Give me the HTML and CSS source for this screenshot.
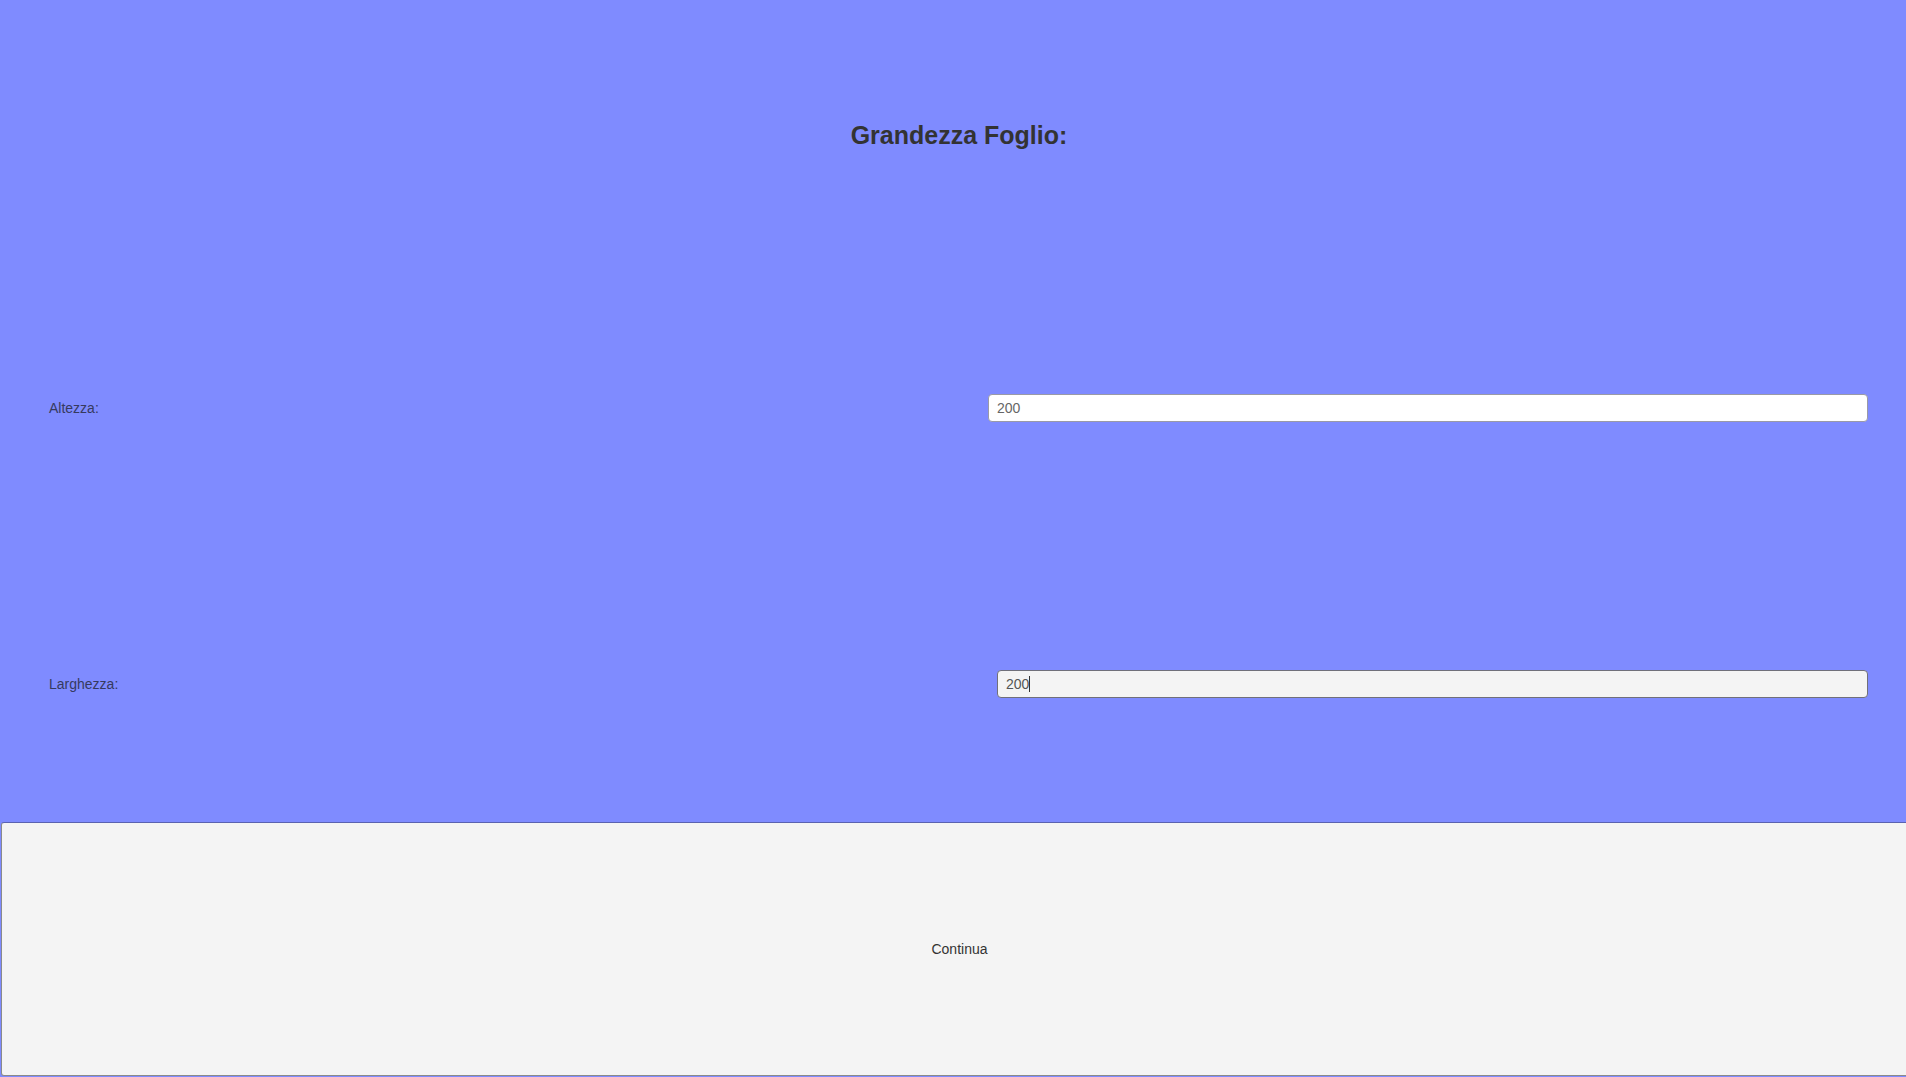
FILE: index.html
```html
<!DOCTYPE html>
<html lang="it">
<head>
<meta charset="utf-8">
<title>Grandezza Foglio</title>
<link rel="stylesheet" href="styles.css">
</head>
<body>
<div class="page">
  <header class="head">
    <h1 class="title">Grandezza Foglio:</h1>
  </header>
  <div class="row">
    <label class="label" for="alt">Altezza:</label>
    <input class="field field-a" id="alt" type="text" value="200">
  </div>
  <div class="row">
    <label class="label" for="larg">Larghezza:</label>
    <div class="field field-b"><span class="val">200</span><span class="caret"></span></div>
  </div>
  <button class="btn" type="button">Continua</button>
</div>
</body>
</html>
```

FILE: styles.css
```css
html, body {
  margin: 0;
  padding: 0;
  height: 100%;
  overflow: hidden;
  background: #7f8bff;
}
body {
  font-family: "Liberation Sans", Arial, sans-serif;
  color: #333;
}
.page {
  width: 1918px;
  display: flex;
  flex-direction: column;
}
.head {
  height: 270px;
  display: flex;
  align-items: center;
  justify-content: center;
}
.title {
  margin: 0;
  font-size: 25px;
  font-weight: bold;
  color: #333;
}
.row {
  height: 276px;
  display: flex;
  align-items: center;
  justify-content: space-between;
  padding: 0 50px 0 49px;
  box-sizing: border-box;
}
.label {
  font-size: 14px;
  color: #363a5e;
}
.field {
  box-sizing: border-box;
  height: 28px;
  border-radius: 4px;
  font-family: "Liberation Sans", Arial, sans-serif;
  font-size: 14px;
  color: #666;
  outline: none;
}
.field-a {
  width: 880px;
  border: 1px solid #9a9aa6;
  background: #fff;
  padding: 0 8px;
}
.field-b {
  width: 871px;
  border: 1px solid #70707a;
  background: #f4f4f4;
  padding: 0 8px;
  display: flex;
  align-items: center;
  color: #555;
}
.caret {
  display: inline-block;
  width: 1px;
  height: 16px;
  background: #333;
}
.btn {
  margin: 0 0 0 1px;
  width: 1917px;
  height: 254px;
  box-sizing: border-box;
  border: 1px solid #8a8a8a;
  border-top-color: #5a62b0;
  border-radius: 3px;
  background: #f4f4f4;
  font-family: "Liberation Sans", Arial, sans-serif;
  font-size: 14px;
  color: #333;
  padding: 0;
}
```
